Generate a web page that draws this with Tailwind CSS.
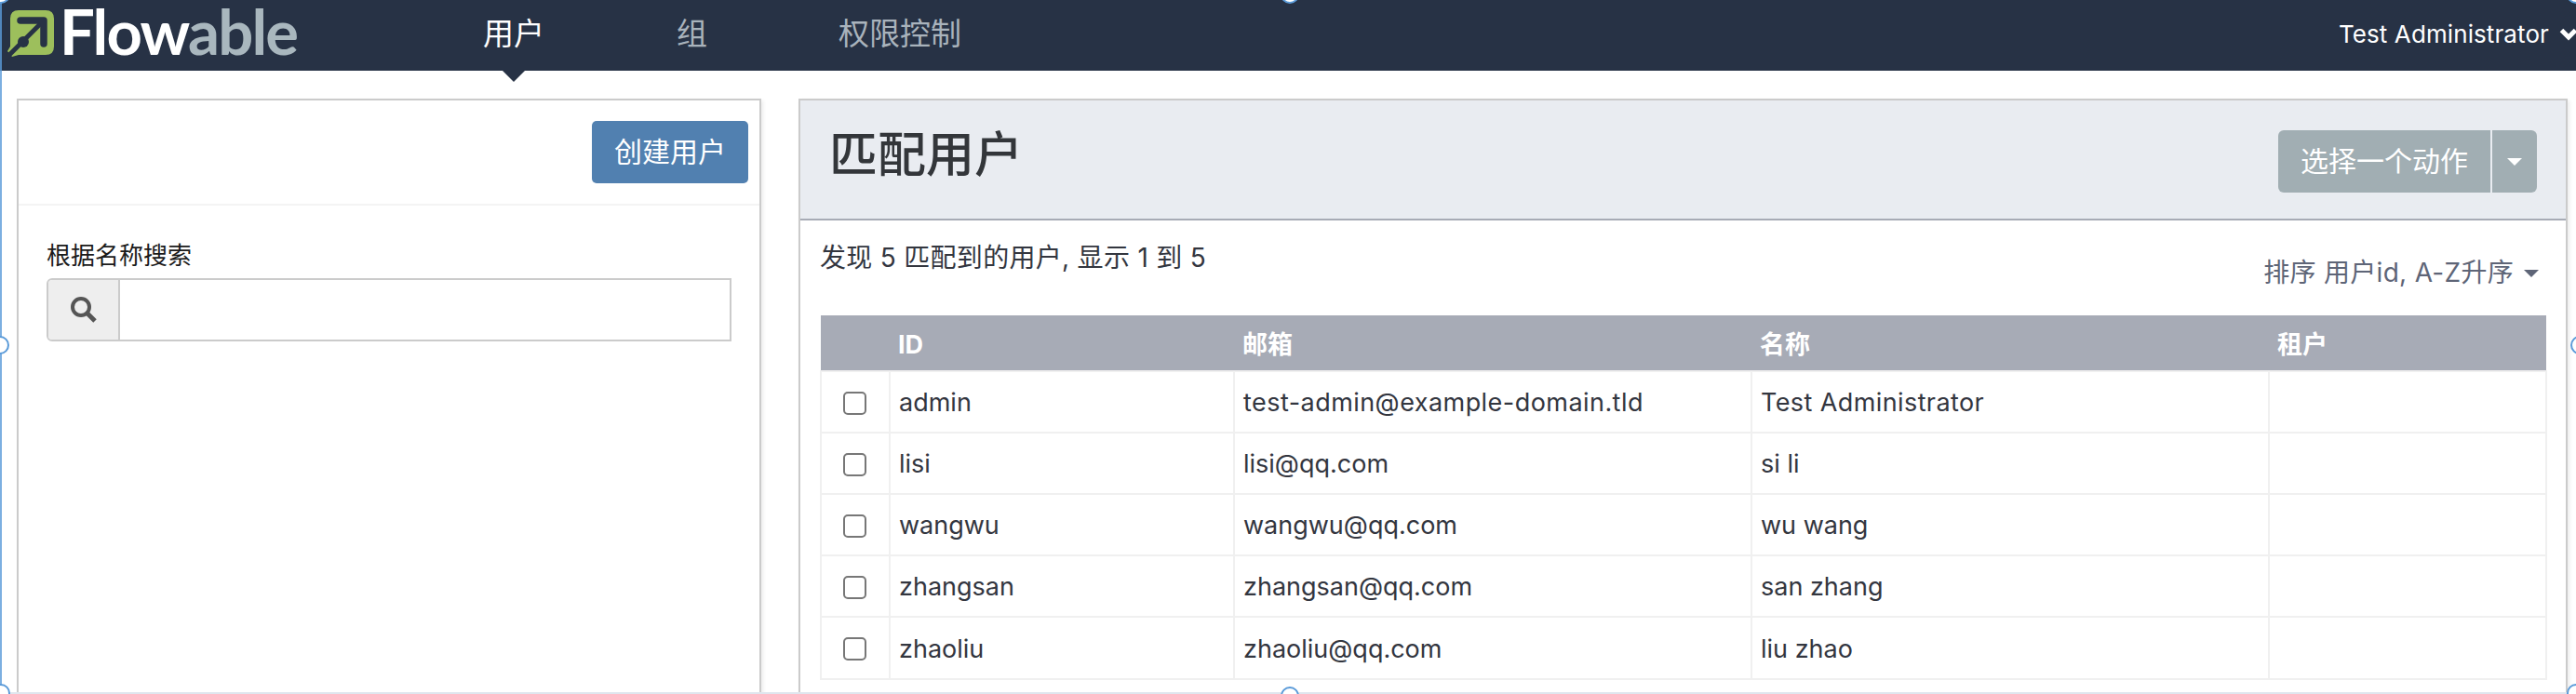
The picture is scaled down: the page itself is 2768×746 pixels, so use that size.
<!DOCTYPE html>
<html lang="zh"><head><meta charset="utf-8">
<script src="https://cdn.jsdelivr.net/npm/@tailwindcss/browser@4"></script>
</head>
<body class="bg-white">
<div class="relative w-[2768px] h-[746px] overflow-hidden bg-white text-[27px] text-[#33363f] font-['Inter','Noto_Sans_CJK_SC',sans-serif]">
  <header class="h-[76px] bg-[#273245] flex items-center">
    <div class="w-[340px] h-full flex items-start pl-[6px] gap-[2px]">
      <svg width="56" height="56" viewBox="6 8 56 56" class="shrink-0 mt-[8px]">
        <path d="M20 11H49Q58 11 58 20V50Q58 59 49 59H20L13 61L8 55L11 50V20Q11 11 20 11Z" fill="#9dbf5c"/>
        <path d="M47 22L6 63" stroke="#273245" stroke-width="5" fill="none"/>
        <path d="M22 22H47V47" stroke="#273245" stroke-width="7.5" stroke-linecap="round" stroke-linejoin="round" fill="none"/>
        <circle cx="25" cy="45" r="6" fill="#273245"/>
      </svg>
      <span class="text-[67px] leading-[67px] font-bold tracking-[-1.8px] font-['Lato',sans-serif] text-white">Flow<span class="text-[#a9b7be]">able</span></span>
    </div>
    <nav class="flex items-center h-full text-[33px] text-[#a9b3bc]">
      <a class="relative ml-[179px] text-white leading-none mt-[-3px]">用户<span class="absolute left-[21px] top-[56px] w-0 h-0 border-x-[12px] border-x-transparent border-t-[12px] border-t-[#273245]"></span></a>
      <a class="ml-[142px] leading-none mt-[-3px]">组</a>
      <a class="ml-[141px] leading-none mt-[-3px]">权限控制</a>
    </nav>
    <div class="ml-auto flex items-center text-white text-[26px] tracking-[0.1px] mt-[-4px] mr-[-2px]">
      <span>Test Administrator</span>
      <svg width="20" height="15" viewBox="0 0 20 15" class="ml-[11px]"><path d="M2.5 3.5L10 11L17.5 3.5" fill="none" stroke="#fff" stroke-width="5"/></svg>
    </div>
  </header>

  <main class="flex items-start pl-[18px] pr-[11px] pt-[30px] gap-[40px]">
    <aside class="w-[800px] h-[700px] shrink-0 border-2 border-[#cbcbcb] shadow-[2px_2px_4px_rgba(0,0,0,0.08)]">
      <div class="h-[113px] border-b-2 border-[#f4f4f4] flex justify-end items-start pt-[22px] pr-[12px]">
        <button class="w-[168px] h-[67px] rounded-[5px] bg-[#5180b0] text-white text-[30px]">创建用户</button>
      </div>
      <div class="pt-[34px] pl-[30px] pr-[30px]">
        <label class="block text-[26px] leading-[40px] text-[#1b1b1b] mb-[4px]">根据名称搜索</label>
        <div class="flex h-[68px] w-[736px] border-2 border-[#cbcbcb] rounded-l-[6px]">
          <span class="w-[77px] shrink-0 bg-[#eeeeee] border-r-2 border-[#cbcbcb] rounded-l-[4px] flex items-center justify-center">
            <svg width="30" height="30" viewBox="0 0 30 30"><circle cx="12" cy="12" r="9" fill="none" stroke="#555" stroke-width="4"/><path d="M18 18L27 27" stroke="#555" stroke-width="5"/></svg>
          </span>
          <input class="flex-1 min-w-0 bg-white outline-none">
        </div>
      </div>
    </aside>

    <section class="flex-1 h-[700px] border-2 border-[#cbcbcb] shadow-[2px_2px_4px_rgba(0,0,0,0.08)]">
      <div class="h-[129px] bg-[#e9ecf1] border-b-2 border-[#a7abb5] flex items-start justify-between pl-[31px] pr-[31px]">
        <h1 class="text-[52px] leading-[60px] mt-[29px] font-medium text-[#33363a]">匹配用户</h1>
        <div class="flex mt-[32px] h-[67px] text-white text-[30px] gap-[2px]">
          <button class="w-[228px] rounded-l-[6px] bg-[#a1aeb3]">选择一个动作</button>
          <button class="w-[48px] rounded-r-[6px] bg-[#a1aeb3] flex items-center justify-center"><span class="w-0 h-0 border-x-[8px] border-x-transparent border-t-[8px] border-t-white"></span></button>
        </div>
      </div>
      <div class="pl-[21px] pr-[20px]">
        <div class="h-[102px] flex justify-between items-start">
          <p class="mt-[20px] leading-[40px] text-[28px] tracking-[0.3px]">发现 5 匹配到的用户, 显示 1 到 5</p>
          <div class="mt-[36px] flex items-center text-[28px] tracking-[0.3px] leading-[40px] text-[#5e6577] pr-[9px]">
            排序 用户id, A-Z升序
            <span class="ml-[11px] mt-[2px] w-0 h-0 border-x-[8px] border-x-transparent border-t-[8px] border-t-[#5e6577]"></span>
          </div>
        </div>
        <table class="w-[1854px] table-fixed border-collapse">
          <colgroup><col class="w-[74px]"><col class="w-[370px]"><col class="w-[556px]"><col class="w-[556px]"><col class="w-[298px]"></colgroup>
          <thead class="bg-[#a7abb6] text-white font-bold text-[27px] text-left">
            <tr class="h-[60px]"><th></th><th class="pl-[9px] pt-[6px]">ID</th><th class="pl-[9px] pt-[6px]">邮箱</th><th class="pl-[9px] pt-[6px]">名称</th><th class="pl-[9px] pt-[6px]">租户</th></tr>
          </thead>
          <tbody>
            <tr class="h-[66px]"><td class="border-2 border-[#f0f0f0] text-center pr-[2px]"><span class="inline-block align-middle size-[25px] border-2 border-[#777] rounded-[5px]"></span></td><td class="border-2 border-[#f0f0f0] pl-[9px] pt-[3px]">admin</td><td class="border-2 border-[#f0f0f0] pl-[9px] pt-[3px] tracking-[0.45px]">test-admin@example-domain.tld</td><td class="border-2 border-[#f0f0f0] pl-[9px] pt-[3px] tracking-[0.4px]">Test Administrator</td><td class="border-2 border-[#f0f0f0]"></td></tr>
            <tr class="h-[66px]"><td class="border-2 border-[#f0f0f0] text-center pr-[2px]"><span class="inline-block align-middle size-[25px] border-2 border-[#777] rounded-[5px]"></span></td><td class="border-2 border-[#f0f0f0] pl-[9px] pt-[3px]">lisi</td><td class="border-2 border-[#f0f0f0] pl-[9px] pt-[3px]">lisi@qq.com</td><td class="border-2 border-[#f0f0f0] pl-[9px] pt-[3px]">si li</td><td class="border-2 border-[#f0f0f0]"></td></tr>
            <tr class="h-[66px]"><td class="border-2 border-[#f0f0f0] text-center pr-[2px]"><span class="inline-block align-middle size-[25px] border-2 border-[#777] rounded-[5px]"></span></td><td class="border-2 border-[#f0f0f0] pl-[9px] pt-[3px]">wangwu</td><td class="border-2 border-[#f0f0f0] pl-[9px] pt-[3px]">wangwu@qq.com</td><td class="border-2 border-[#f0f0f0] pl-[9px] pt-[3px]">wu wang</td><td class="border-2 border-[#f0f0f0]"></td></tr>
            <tr class="h-[66px]"><td class="border-2 border-[#f0f0f0] text-center pr-[2px]"><span class="inline-block align-middle size-[25px] border-2 border-[#777] rounded-[5px]"></span></td><td class="border-2 border-[#f0f0f0] pl-[9px] pt-[3px]">zhangsan</td><td class="border-2 border-[#f0f0f0] pl-[9px] pt-[3px]">zhangsan@qq.com</td><td class="border-2 border-[#f0f0f0] pl-[9px] pt-[3px]">san zhang</td><td class="border-2 border-[#f0f0f0]"></td></tr>
            <tr class="h-[67px]"><td class="border-2 border-[#f0f0f0] text-center pr-[2px]"><span class="inline-block align-middle size-[25px] border-2 border-[#777] rounded-[5px]"></span></td><td class="border-2 border-[#f0f0f0] pl-[9px] pt-[3px]">zhaoliu</td><td class="border-2 border-[#f0f0f0] pl-[9px] pt-[3px]">zhaoliu@qq.com</td><td class="border-2 border-[#f0f0f0] pl-[9px] pt-[3px]">liu zhao</td><td class="border-2 border-[#f0f0f0]"></td></tr>
          </tbody>
        </table>
      </div>
    </section>
  </main>

  <!-- selection frame drawn over the page -->
  <div class="absolute left-0 top-0 w-[2px] h-full bg-[#5b9bd9]/80"></div>
  <div class="absolute left-0 right-0 bottom-0 h-[2px] bg-[#dfe6ee]"></div>
  <span class="absolute left-[-10px] top-[361px] size-[20px] rounded-full bg-white border-2 border-[#5b9bd9]"></span>
  <span class="absolute right-[-14px] top-[361px] size-[20px] rounded-full bg-white border-2 border-[#5b9bd9]"></span>
  <span class="absolute left-[1376px] top-[-16px] size-[20px] rounded-full bg-white border-2 border-[#5b9bd9]"></span>
  <span class="absolute left-[1376px] bottom-[-12px] size-[20px] rounded-full bg-white border-2 border-[#5b9bd9]"></span>
  <span class="absolute left-[-9px] top-[-16px] size-[20px] rounded-full bg-white border-2 border-[#5b9bd9]"></span>
  <span class="absolute right-[-10px] top-[-16px] size-[20px] rounded-full bg-white border-2 border-[#5b9bd9]"></span>
  <span class="absolute left-[-9px] bottom-[-9px] size-[20px] rounded-full bg-white border-2 border-[#5b9bd9]"></span>
  <span class="absolute right-[-10px] bottom-[-9px] size-[20px] rounded-full bg-white border-2 border-[#5b9bd9]"></span>
</div>
</body></html>
